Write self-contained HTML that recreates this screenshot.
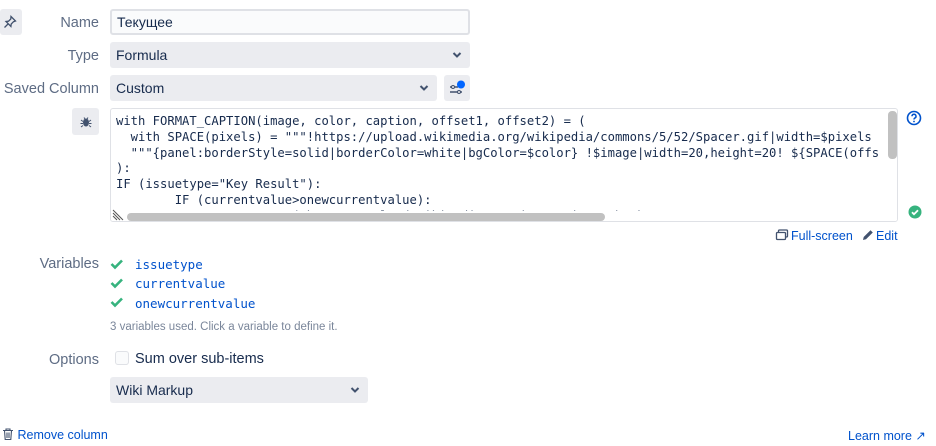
<!DOCTYPE html>
<html><head><meta charset="utf-8"><style>
*{box-sizing:border-box;margin:0;padding:0}
body{width:936px;height:446px;background:#fff;position:relative;overflow:hidden;font-family:"Liberation Sans",Arial,sans-serif;font-size:14px;color:#172b4d}
.a{position:absolute}
.lbl{position:absolute;right:837px;color:#5e6c84;font-size:14.5px;text-align:right;white-space:nowrap}
.sel{position:absolute;background:#ebecf0;border-radius:3px;height:26px;padding:5px 6px;font-size:14px;color:#172b4d}
.chev{position:absolute;right:8px;top:6px}
.btn{position:absolute;background:#ebecf0;border-radius:3px}
.mono{font-family:"DejaVu Sans Mono","Liberation Mono",monospace}
a{color:#0052cc;text-decoration:none}
</style></head><body>
<div class="btn" style="left:0;top:9px;width:22px;height:26px">
<svg class="a" style="left:3px;top:6px" width="14" height="14" viewBox="0 0 14 14" fill="none" stroke="#42526e" stroke-width="1.3"><path d="M8 1.5l4.5 4.5-2 .7-2.3 2.3-.3 2.5L3 6.5l2.5-.3 2.3-2.3z M5 9l-3.5 3.5"/></svg></div>
<div class="lbl" style="top:15px">Name</div>
<div class="a" style="left:110px;top:9px;width:360px;height:26px;border:2px solid #dfe1e6;border-radius:3px;background:#fafbfc;padding:3px 5px">Текущее</div>
<div class="lbl" style="top:48px">Type</div>
<div class="sel" style="left:110px;top:42px;width:360px">Formula<svg class="chev" width="10" height="14" viewBox="0 0 10 14"><path d="M1.5 5l3.5 3.5L8.5 5" fill="none" stroke="#42526e" stroke-width="2"/></svg></div>
<div class="lbl" style="top:81px">Saved Column</div>
<div class="sel" style="left:110px;top:75px;width:327px">Custom<svg class="chev" width="10" height="14" viewBox="0 0 10 14"><path d="M1.5 5l3.5 3.5L8.5 5" fill="none" stroke="#42526e" stroke-width="2"/></svg></div>
<div class="btn" style="left:444px;top:75px;width:26px;height:26px">
<svg class="a" style="left:5px;top:5px" width="17" height="16" viewBox="0 0 17 16"><path d="M1 7h8M1 12h12" stroke="#42526e" stroke-width="1.5"/><circle cx="4" cy="7" r="1.5" fill="#ebecf0" stroke="#42526e"/><circle cx="10" cy="12" r="1.5" fill="#ebecf0" stroke="#42526e"/><circle cx="12" cy="4.5" r="4" fill="#0065ff"/></svg></div>
<div class="btn" style="left:72px;top:108px;width:27px;height:27px">
<svg class="a" style="left:8px;top:7px" width="12" height="13" viewBox="0 0 12 13"><ellipse cx="6" cy="7.5" rx="3" ry="4" fill="#42526e"/><path d="M1 5l2 1.5M11 5l-2 1.5M0.5 8.5h2.5M11.5 8.5H9M1 12l2-1.5M11 12l-2-1.5M4 2.5l1 1.5M8 2.5l-1 1.5" stroke="#42526e" stroke-width="1"/></svg></div>
<div class="a" style="left:110px;top:108px;width:788px;height:114px;border:1px solid #dfe1e6;border-radius:3px;overflow:hidden">
<pre class="mono a" style="left:5px;top:5px;font-size:12.2px;line-height:15.8px;color:#172b4d">with FORMAT_CAPTION(image, color, caption, offset1, offset2) = (
  with SPACE(pixels) = """!https://upload.wikimedia.org/wikipedia/commons/5/52/Spacer.gif|width=$pixels
  """{panel:borderStyle=solid|borderColor=white|bgColor=$color} !$image|width=20,height=20! ${SPACE(offs
):
IF (issuetype="Key Result"):
        IF (currentvalue>onewcurrentvalue):
          FORMAT_CAPTION("https://upload.wikimedia.org/images/icon-check.png", "#E3FCEF"</pre>
<div class="a" style="left:0;top:102px;width:788px;height:12px;background:#fff"></div>
<div class="a" style="left:16px;top:104px;width:478px;height:8px;background:#c1c1c1;border-radius:4px"></div>
<div class="a" style="left:777px;top:2px;width:9px;height:48px;background:#c1c1c1;border-radius:4px"></div>
<svg class="a" style="left:1px;top:100px" width="12" height="12" viewBox="0 0 12 12"><path d="M1 1l10 10M1 4l7 7M1 7l4 4" stroke="#555" stroke-width="1"/></svg>
</div>
<svg class="a" style="left:906px;top:110px" width="16" height="16" viewBox="0 0 16 16"><circle cx="8" cy="8" r="6.5" fill="none" stroke="#0052cc" stroke-width="1.6"/><path d="M6 6.3a2 2 0 1 1 2.8 1.8c-.6.3-.8.7-.8 1.4" fill="none" stroke="#0052cc" stroke-width="1.5"/><circle cx="8" cy="11.5" r=".9" fill="#0052cc"/></svg>
<svg class="a" style="left:908px;top:205px" width="14" height="14" viewBox="0 0 14 14"><circle cx="7" cy="7" r="6.5" fill="#36b37e"/><path d="M4 7.2l2 2 4-4" fill="none" stroke="#fff" stroke-width="1.8"/></svg>
<div class="a" style="left:775px;top:229px;font-size:12.5px"><svg width="14" height="12" viewBox="0 0 13 12" style="vertical-align:-1px;margin-right:2px"><rect x="3" y="1" width="9" height="7" rx="1" fill="none" stroke="#42526e" stroke-width="1.3"/><rect x="1" y="3.5" width="9" height="7" rx="1" fill="#fff" stroke="#42526e" stroke-width="1.3"/></svg><a>Full-screen</a></div>
<div class="a" style="left:862px;top:229px;font-size:12.5px"><svg width="12" height="12" viewBox="0 0 12 12" style="vertical-align:-1px;margin-right:2px"><path d="M1 11l.7-3L8.5 1.2l2.3 2.3L4 10.3z" fill="#42526e"/></svg><a>Edit</a></div>
<div class="lbl" style="top:256px">Variables</div>
<svg class="a" style="left:110px;top:258px" width="14" height="12" viewBox="0 0 14 12"><path d="M1.5 6l3.5 3.5 7-7" fill="none" stroke="#36b37e" stroke-width="2.6"/></svg>
<svg class="a" style="left:110px;top:277px" width="14" height="12" viewBox="0 0 14 12"><path d="M1.5 6l3.5 3.5 7-7" fill="none" stroke="#36b37e" stroke-width="2.6"/></svg>
<svg class="a" style="left:110px;top:296px" width="14" height="12" viewBox="0 0 14 12"><path d="M1.5 6l3.5 3.5 7-7" fill="none" stroke="#36b37e" stroke-width="2.6"/></svg>
<div class="a mono" style="left:135px;top:255px;font-size:12.5px;line-height:19.3px;color:#0052cc">issuetype<br>currentvalue<br>onewcurrentvalue</div>
<div class="a" style="left:110px;top:321px;font-size:11.5px;color:#7a869a">3 variables used. Click a variable to define it.</div>
<div class="lbl" style="top:352px">Options</div>
<div class="a" style="left:115px;top:351px;width:14px;height:14px;border:1.5px solid #dfe1e6;border-radius:3px;background:#fafbfc"></div>
<div class="a" style="left:135px;top:351px;font-size:14.5px">Sum over sub-items</div>
<div class="sel" style="left:110px;top:377px;width:258px">Wiki Markup<svg class="chev" width="10" height="14" viewBox="0 0 10 14"><path d="M1.5 5l3.5 3.5L8.5 5" fill="none" stroke="#42526e" stroke-width="2"/></svg></div>
<div class="a" style="left:2px;top:428px;font-size:12.5px"><svg width="12" height="12" viewBox="0 0 12 12" style="vertical-align:-1px"><path d="M1 2.5h10M4 2.5V1h4v1.5M2.5 2.5l.7 9h5.6l.7-9M5 4.5v5.5M7 4.5v5.5" fill="none" stroke="#42526e" stroke-width="1.1"/></svg> <a>Remove column</a></div>
<div class="a" style="left:848px;top:428px;font-size:12.5px"><a>Learn more ↗</a></div>
</body></html>
